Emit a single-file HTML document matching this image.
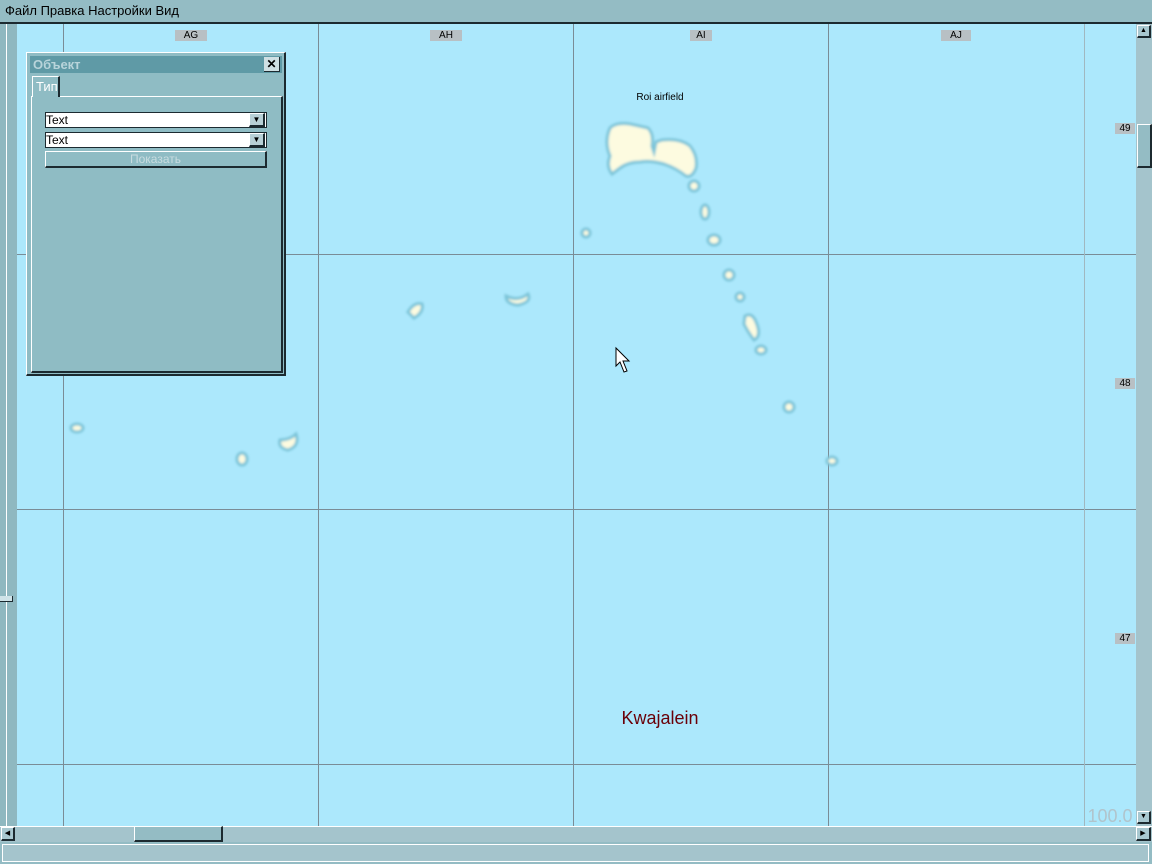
<!DOCTYPE html>
<html><head><meta charset="utf-8"><style>
body{margin:0;width:1152px;height:864px;overflow:hidden;background:#94bcc4;font-family:"Liberation Sans",sans-serif;position:relative}
.abs{position:absolute}
.menu{left:0;top:0;width:1152px;height:24px;background:#94bcc4;border-bottom:2px solid #1c2a30;box-sizing:border-box;font-size:13px;line-height:22px;padding-left:5px;color:#000}
.lbl{position:absolute;background:#b8c0c4;font-size:10px;text-align:center;color:#000;line-height:11px;height:11px}
.btn3d{background:#a8c8d0;border-top:1px solid #fff;border-left:1px solid #fff;border-right:2px solid #1c2a30;border-bottom:2px solid #1c2a30;box-sizing:border-box}
</style></head><body>
<div class="abs menu">Файл Правка Настройки Вид</div>
<div class="abs" style="left:0;top:24px;width:17px;height:802px;background:#8fb8c0"></div>
<div class="abs" style="left:6px;top:24px;width:1px;height:802px;background:#fff"></div>
<div class="abs" style="left:0;top:596px;width:12px;height:5px;background:#cfe3e8;border-bottom:1px solid #1c2a30;border-right:1px solid #1c2a30"></div>
<svg class="abs" style="left:17px;top:24px" width="1119" height="802" viewBox="17 24 1119 802">
<defs><filter id="b" x="-50%" y="-50%" width="200%" height="200%"><feGaussianBlur stdDeviation="1.2"/></filter></defs>
<rect x="17" y="24" width="1119" height="802" fill="#ace8fc"/>
<g stroke="#7a8c96" stroke-width="1">
<line x1="63.5" y1="24" x2="63.5" y2="826"/><line x1="318.5" y1="24" x2="318.5" y2="826"/>
<line x1="573.5" y1="24" x2="573.5" y2="826"/><line x1="828.5" y1="24" x2="828.5" y2="826"/>
<line x1="17" y1="254.5" x2="1136" y2="254.5"/><line x1="17" y1="509.5" x2="1136" y2="509.5"/><line x1="17" y1="764.5" x2="1136" y2="764.5"/>
</g>
<line x1="1084.5" y1="24" x2="1084.5" y2="826" stroke="#a0b8c0"/>
<g fill="#fdfbe0" stroke="#7cc4d8" stroke-width="3" filter="url(#b)">
<path d="M610 128 Q616 122 630 124 L648 128 Q654 134 652 146 L654 152 L656 142 L662 140 Q680 138 690 146 Q698 156 696 168 Q692 178 686 176 Q676 168 664 164 Q650 160 640 162 Q628 162 620 168 L612 174 Q606 166 610 156 Q604 142 610 128 Z"/>
<ellipse cx="694" cy="186" rx="5" ry="5"/>
<ellipse cx="705" cy="212" rx="4" ry="7"/>
<ellipse cx="714" cy="240" rx="6" ry="5"/>
<ellipse cx="586" cy="233" rx="4" ry="4"/>
<ellipse cx="729" cy="275" rx="5" ry="5"/>
<ellipse cx="740" cy="297" rx="4" ry="4"/>
<path d="M745 316 Q752 312 756 322 Q762 336 754 340 Q748 332 744 324 Z"/>
<ellipse cx="761" cy="350" rx="5" ry="4"/>
<ellipse cx="789" cy="407" rx="5" ry="5"/>
<ellipse cx="832" cy="461" rx="5" ry="4"/>
<path d="M408 312 Q414 302 422 304 Q424 312 414 318 Z"/>
<path d="M506 296 Q518 302 528 294 Q532 302 518 305 Q506 304 506 296 Z"/>
<ellipse cx="77" cy="428" rx="6" ry="4"/>
<ellipse cx="242" cy="459" rx="5" ry="6"/>
<path d="M280 440 Q290 440 296 434 Q300 446 288 450 Q278 448 280 440 Z"/>
</g>
<text x="660" y="100" font-size="10" text-anchor="middle" fill="#000" font-family="Liberation Sans">Roi airfield</text>
<text x="660" y="724" font-size="18" text-anchor="middle" fill="#6a0008" font-family="Liberation Sans">Kwajalein</text>
<text x="1110" y="822" font-size="18" text-anchor="middle" fill="#b0c4cc" font-family="Liberation Sans">100.0</text>
<path d="M616 348 L616 366 L620 362 L624 372 L627 371 L623 361 L629 361 Z" fill="#fff" stroke="#000" stroke-width="1"/>
</svg>
<div class="lbl" style="left:175px;top:30px;width:32px">AG</div>
<div class="lbl" style="left:430px;top:30px;width:32px">AH</div>
<div class="lbl" style="left:690px;top:30px;width:22px">AI</div>
<div class="lbl" style="left:941px;top:30px;width:30px">AJ</div>
<div class="lbl" style="left:1115px;top:123px;width:20px">49</div>
<div class="lbl" style="left:1115px;top:378px;width:20px">48</div>
<div class="lbl" style="left:1115px;top:633px;width:20px">47</div>
<div class="abs" style="left:1136px;top:24px;width:16px;height:802px;background:#a4c4cc"></div>
<div class="abs btn3d" style="left:1137px;top:25px;width:14px;height:13px;font-size:7px;text-align:center;line-height:10px">▲</div>
<div class="abs btn3d" style="left:1137px;top:124px;width:15px;height:44px;background:#94bcc4"></div>
<div class="abs btn3d" style="left:1137px;top:811px;width:14px;height:13px;font-size:7px;text-align:center;line-height:10px">▼</div>
<div class="abs" style="left:0;top:826px;width:1152px;height:16px;background:#a4c4cc;border-top:1px solid #fff;box-sizing:border-box"></div>
<div class="abs btn3d" style="left:1px;top:827px;width:14px;height:14px;font-size:7px;text-align:center;line-height:11px">◀</div>
<div class="abs btn3d" style="left:134px;top:826px;width:89px;height:16px;background:#94bcc4"></div>
<div class="abs btn3d" style="left:1136px;top:827px;width:15px;height:14px;font-size:7px;text-align:center;line-height:11px">▶</div>
<div class="abs" style="left:0;top:842px;width:1152px;height:22px;background:#94bcc4"></div>
<div class="abs" style="left:2px;top:844px;width:1147px;height:18px;background:#a4c4cc;border:1px solid #fff;box-sizing:border-box"></div>
<div class="abs" style="left:26px;top:52px;width:260px;height:324px;background:#8fbcc4;border-top:1px solid #fff;border-left:1px solid #fff;border-right:2px solid #1c2a30;border-bottom:2px solid #1c2a30;box-sizing:border-box"></div>
<div class="abs" style="left:30px;top:56px;width:252px;height:17px;background:#5f9aa6;color:#b8d4da;font-weight:bold;font-size:13px;line-height:17px;padding-left:3px;box-sizing:border-box">Объект</div>
<div class="abs" style="left:264px;top:57px;width:15px;height:14px;background:#cfe0e4;border-right:1px solid #1c2a30;border-bottom:1px solid #1c2a30;font-size:12px;font-weight:bold;text-align:center;line-height:14px">✕</div>
<div class="abs" style="left:31px;top:96px;width:252px;height:277px;border-top:1px solid #fff;border-left:1px solid #fff;border-right:2px solid #1c2a30;border-bottom:2px solid #1c2a30;box-sizing:border-box"></div>
<div class="abs" style="left:32px;top:76px;width:28px;height:21px;background:#8fbcc4;border-top:1px solid #fff;border-left:1px solid #fff;border-right:2px solid #1c2a30;box-sizing:border-box;color:#fff;font-size:13px;line-height:20px;padding-left:3px">Тип</div>
<div class="abs" style="left:45px;top:112px;width:222px;height:16px;background:#fff;border:1px solid #1c2a30;box-sizing:border-box;font-size:12px;line-height:14px">Text</div>
<div class="abs btn3d" style="left:249px;top:113px;width:16px;height:14px;background:#b8d0d6;font-size:8px;text-align:center;line-height:12px">▼</div>
<div class="abs" style="left:45px;top:132px;width:222px;height:16px;background:#fff;border:1px solid #1c2a30;box-sizing:border-box;font-size:12px;line-height:14px">Text</div>
<div class="abs btn3d" style="left:249px;top:133px;width:16px;height:14px;background:#b8d0d6;font-size:8px;text-align:center;line-height:12px">▼</div>
<div class="abs btn3d" style="left:45px;top:151px;width:222px;height:17px;background:#8fbcc4;color:#c8dce0;font-size:12px;text-align:center;line-height:15px">Показать</div>
</body></html>
